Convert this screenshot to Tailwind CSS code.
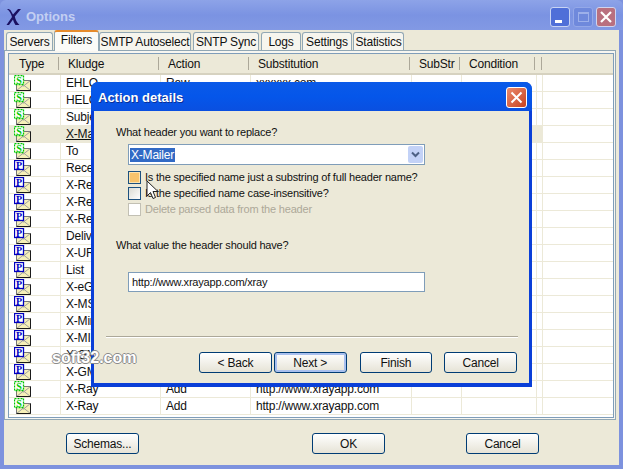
<!DOCTYPE html>
<html lang="en">
  <head>
    <meta charset="UTF-8" />
    <title>Options</title>
    <script src="https://cdn.jsdelivr.net/npm/@tailwindcss/browser@4"></script>
  </head>
  <body class="bg-white">
    <div class="relative w-[623px] h-[469px] overflow-hidden flex flex-col bg-[#7d92de] text-[11px] tracking-[-0.1px] leading-[14px] text-[#111] font-['Liberation_Sans',sans-serif]">

      <!-- outer title bar (inactive) -->
      <div class="h-[30px] pt-[3px] flex items-center shrink-0 bg-gradient-to-b from-[#8da3e8] via-[#7b93e2] to-[#8299e4] rounded-t-[6px]">
        <svg class="ml-[6px]" width="16" height="18" viewBox="0 0 16 18">
          <path d="M1 1c2 0 3.500.5 4 2l2 3.500L12 1h3L8.800 8.500c.7 3 2 6 4.700 8.500H9.500C8.500 15.500 7.500 13.500 7 11.500L3 17H.5L6 9C5 6 4 3 1 1z" fill="#1b1060" />
        </svg>
        <span class="ml-[4px] font-bold text-[13px] tracking-normal text-[#c3cff2]">Options</span>
        <div class="ml-auto mr-[7px] flex gap-[3px]">
          <div class="w-[20px] h-[20px] rounded-[3px] border border-[#c8d4f4] bg-[#4f6fd8] flex items-end justify-center pb-[3px]"><div class="w-[7px] h-[3px] bg-white ml-[-3px]"></div></div>
          <div class="w-[20px] h-[20px] rounded-[3px] border border-[#94a8e8] bg-[#6f89dc] flex items-center justify-center"><div class="w-[11px] h-[10px] border border-[#9db0ea] border-t-2"></div></div>
          <div class="w-[20px] h-[20px] rounded-[3px] border border-[#d0d4ee] bg-[#b9707f] flex items-center justify-center">
            <svg width="12" height="12" viewBox="0 0 12 12"><path d="M1 1l10 10M11 1L1 11" stroke="#fff" stroke-width="2.200" /></svg>
          </div>
        </div>
      </div>

      <!-- window body -->
      <div class="flex-1 mx-[4px] mb-[4px] bg-[#ece9d8] flex flex-col">
        <!-- tabs -->
        <div class="h-[20px] flex items-end pl-[2px] relative z-10 whitespace-nowrap text-[12px] tracking-[-0.2px]">
          <div class="h-[18px] w-[47px] mr-[1px] flex items-center justify-center bg-[#f6f5ee] border border-b-0 border-[#91a7b4] rounded-t-[3px]">Servers</div>
          <div class="h-[21px] w-[45px] mb-[-1px] pb-[3px] flex items-center justify-center bg-[#fbfbf8] border-x border-[#91a7b4] border-t-2 border-t-[#e68b2c] rounded-t-[3px]">Filters</div>
          <div class="h-[18px] w-[92px] mr-[2px] flex items-center justify-center bg-[#f6f5ee] border border-b-0 border-[#91a7b4] rounded-t-[3px]">SMTP Autoselect</div>
          <div class="h-[18px] w-[66px] mr-[2px] flex items-center justify-center bg-[#f6f5ee] border border-b-0 border-[#91a7b4] rounded-t-[3px]">SNTP Sync</div>
          <div class="h-[18px] w-[40px] mr-[1px] flex items-center justify-center bg-[#f6f5ee] border border-b-0 border-[#91a7b4] rounded-t-[3px]">Logs</div>
          <div class="h-[18px] w-[50px] mr-[1px] flex items-center justify-center bg-[#f6f5ee] border border-b-0 border-[#91a7b4] rounded-t-[3px]">Settings</div>
          <div class="h-[18px] w-[51px] flex items-center justify-center bg-[#f6f5ee] border border-b-0 border-[#91a7b4] rounded-t-[3px]">Statistics</div>
        </div>

        <!-- tab panel -->
        <div class="h-[370px] mr-[3px] border border-[#91a7b4] bg-[#f7f6f0] pt-[2px] pl-[3px] pr-[1px] pb-[1px]">
          <div class="h-full border border-[#7f9db9] bg-white overflow-hidden text-[12px] tracking-[-0.2px]">
            <div class="h-[21px] flex items-center bg-[#ece9d8] border-b-2 border-[#d6d2c0]">
              <div class="w-[50px] pl-[10px] h-[13px] border-r border-[#aca899] flex items-center">Type</div>
              <div class="w-[100px] pl-[9px] h-[13px] border-r border-[#aca899] flex items-center">Kludge</div>
              <div class="w-[90px] pl-[9px] h-[13px] border-r border-[#aca899] flex items-center">Action</div>
              <div class="w-[161px] pl-[9px] h-[13px] border-r border-[#aca899] flex items-center">Substitution</div>
              <div class="w-[50px] pl-[9px] h-[13px] border-r border-[#aca899] flex items-center">SubStr</div>
              <div class="w-[75px] pl-[9px] h-[13px] border-r border-[#aca899] flex items-center">Condition</div>
              <div class="w-[7px] h-[13px] border-r border-[#aca899]"></div>
            </div>
            <div id="rows"></div>
          </div>
        </div>

        <!-- bottom buttons -->
        <div class="flex-1 flex items-center relative pb-[1px] text-[12px] tracking-[-0.2px]">
          <button class="absolute left-[62px] top-[13px] w-[73px] h-[21px] border border-[#003c74] rounded-[3px] bg-gradient-to-b from-white to-[#e6e3d6]">Schemas...</button>
          <button class="absolute left-[308px] top-[13px] w-[73px] h-[21px] border border-[#003c74] rounded-[3px] bg-gradient-to-b from-white to-[#e6e3d6]">OK</button>
          <button class="absolute left-[462px] top-[13px] w-[73px] h-[21px] border border-[#003c74] rounded-[3px] bg-gradient-to-b from-white to-[#e6e3d6]">Cancel</button>
        </div>
      </div>

      <!-- Action details dialog -->
      <div class="absolute left-[91px] top-[82px] w-[441px] h-[305px] flex flex-col rounded-t-[7px] bg-[#0a3fd8] overflow-hidden">
        <div class="h-[29px] pt-[2px] flex items-center shrink-0 bg-gradient-to-b from-[#0a5ae8] via-[#0556ea] to-[#0a4fe0]">
          <span class="ml-[7px] font-bold text-[13px] tracking-normal text-white [text-shadow:1px_1px_#0a2f98]">Action details</span>
          <div class="ml-auto mr-[5px] w-[21px] h-[21px] rounded-[3px] border border-white bg-gradient-to-br from-[#ea8a6c] to-[#c8401c] flex items-center justify-center">
            <svg width="13" height="13" viewBox="0 0 13 13"><path d="M1.500 1.500l10 10M11.500 1.500l-10 10" stroke="#fff" stroke-width="2" /></svg>
          </div>
        </div>
        <div class="flex-1 mx-[3px] mb-[4px] bg-[#ece9d8] pl-[22px] pr-[12px] pt-[14px] text-[11px] tracking-[-0.2px]">
          <p class="h-[14px]">What header you want to replace?</p>
          <div class="mt-[5px] ml-[12px] w-[297px] h-[21px] flex items-center border border-[#7f9db9] bg-white pl-[1px] pr-[1px] text-[12px] tracking-[-0.2px]">
            <span class="bg-[#316ac5] text-white pl-[1px] pr-[1px]">X-Mailer</span>
            <div class="ml-auto w-[15px] h-[17px] rounded-[2px] bg-[#c3d2f7] flex items-center justify-center">
              <svg width="9" height="7" viewBox="0 0 9 7"><path d="M1 1.500l3.500 3.500L8 1.500" fill="none" stroke="#4d6185" stroke-width="2" /></svg>
            </div>
          </div>
          <div class="mt-[4px] ml-[12px] h-[16px] flex items-center gap-[4px]">
            <div class="w-[13px] h-[13px] border border-[#1c5180] bg-[#f7c36c] shadow-[inset_0_0_0_1px_#fbe3b0]"></div><span>Is the specified name just a substring of full header name?</span>
          </div>
          <div class="ml-[12px] h-[16px] flex items-center gap-[4px]">
            <div class="w-[13px] h-[13px] border border-[#1c5180] bg-gradient-to-br from-[#dcdcd4] to-white"></div><span>Is the specified name case-insensitive?</span>
          </div>
          <div class="ml-[12px] h-[16px] flex items-center gap-[4px] text-[#aca899]">
            <div class="w-[13px] h-[13px] border border-[#c2c0b4] bg-white"></div><span>Delete parsed data from the header</span>
          </div>
          <p class="mt-[21px] h-[14px]">What value the header should have?</p>
          <div class="mt-[20px] ml-[12px] w-[297px] h-[20px] flex items-center border border-[#7f9db9] bg-white pl-[3px]">http://www.xrayapp.com/xray</div>
          <div class="mt-[44px] -ml-[10px] w-[412px] h-[2px] bg-[#aca899] border-b border-white"></div>
          <div class="mt-[14px] ml-[83px] flex text-[12px] tracking-[-0.2px]">
            <button class="w-[73px] h-[21px] border border-[#003c74] rounded-[3px] bg-gradient-to-b from-white to-[#e6e3d6]">&lt; Back</button>
            <button class="ml-[2px] w-[73px] h-[21px] border border-[#003c74] rounded-[3px] bg-gradient-to-b from-white to-[#e6e3d6] shadow-[inset_0_0_0_2px_#a9c0ee]">Next &gt;</button>
            <button class="ml-[13px] w-[73px] h-[21px] border border-[#003c74] rounded-[3px] bg-gradient-to-b from-white to-[#e6e3d6]">Finish</button>
            <button class="ml-[12px] w-[73px] h-[21px] border border-[#003c74] rounded-[3px] bg-gradient-to-b from-white to-[#e6e3d6]">Cancel</button>
          </div>
        </div>
      </div>

      <!-- mouse cursor -->
      <svg class="absolute left-[146px] top-[180px]" width="15" height="21" viewBox="0 0 15 21">
        <path d="M1 1v15l3.500-3.500 2.500 6 2.500-1-2.500-6h5z" fill="#fff" stroke="#222" stroke-width="1" />
      </svg>

      <!-- watermark -->
      <div class="absolute left-[52px] top-[349px] font-bold text-[16px] leading-[18px] tracking-normal text-white [text-shadow:1px_0_#8b8b8b,-1px_0_#8b8b8b,0_1px_#8b8b8b,0_-1px_#8b8b8b]">soft32.com</div>
    </div>

    <script>
      // list rows, icon is S (green) or P (blue)
      const rows = [
        ["S", "EHLO", "Raw", "xxxxxx.com"],
        ["S", "HELO", "", ""],
        ["S", "Subject", "", ""],
        ["S", "X-Mailer", "", ""],
        ["S", "To", "", ""],
        ["P", "Received", "", ""],
        ["P", "X-Real", "", ""],
        ["P", "X-Real", "", ""],
        ["P", "X-Real", "", ""],
        ["P", "Delivered", "", ""],
        ["P", "X-URL", "", ""],
        ["P", "List", "", ""],
        ["P", "X-eGroups", "", ""],
        ["P", "X-MS", "", ""],
        ["P", "X-Mimer", "", ""],
        ["P", "X-MIME", "", ""],
        ["P", "X-GM", "", ""],
        ["P", "X-GM", "", ""],
        ["S", "X-Ray", "Add", "http://www.xrayapp.com"],
        ["S", "X-Ray", "Add", "http://www.xrayapp.com"],
      ];

      function icon(kind) {
        const color = kind === "S" ? "#00c800" : "#0000c0";
        const dash = kind === "S" ? 'stroke-dasharray="2 1"' : "";
        return `<svg width="18" height="16" viewBox="0 0 18 16">
          <path d="M2.500 5.500h14v10h-14z" fill="#f6f0b8" stroke="#777" stroke-width="1" />
          <path d="M2.500 15.500l7-5.500 7 5.500M2.500 5.500l7 5.500 7-5.500" fill="none" stroke="#a0a0a0" stroke-width="1" />
          <path d="M16.500 5.500v10h-14" fill="none" stroke="#1a1a1a" stroke-width="1" />
          <rect x="0.500" y="0.500" width="9" height="9" fill="#fff" stroke="${color}" stroke-width="1.300" ${dash} />
          <text x="5" y="8.500" text-anchor="middle" font-size="10" font-weight="bold" font-family="Liberation Serif" fill="${color}">${kind}</text>
        </svg>`;
      }

      document.getElementById("rows").innerHTML = rows
        .map((r, i) => {
          const selected = i === 3;
          return `<div class="h-[17px] flex border-b border-[#ece9d8]">
            <div class="flex w-[534px] ${selected ? "bg-[#ece9d8]" : ""}">
              <div class="w-[52px] pl-[5px] border-r border-[#ece9d8]">${icon(r[0])}</div>
              <div class="w-[100px] pl-[5px] leading-[16px] border-r border-[#ece9d8] ${selected ? "underline" : ""}">${r[1]}</div>
              <div class="w-[90px] pl-[5px] leading-[16px] border-r border-[#ece9d8]">${r[2]}</div>
              <div class="w-[161px] pl-[5px] leading-[16px] border-r border-[#ece9d8]">${r[3]}</div>
              <div class="w-[50px] border-r border-[#ece9d8]"></div>
              <div class="w-[75px] border-r border-[#ece9d8]"></div>
              <div class="w-[6px] border-r border-[#ece9d8]"></div>
            </div>
          </div>`;
        })
        .join("");
    </script>
  </body>
</html>
